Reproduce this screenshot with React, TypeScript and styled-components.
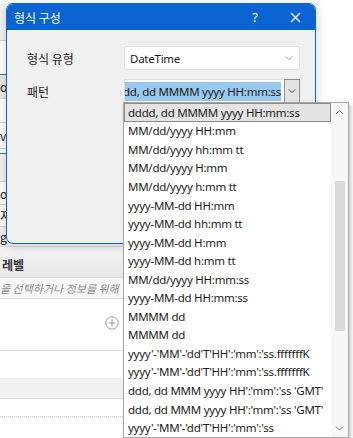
import React from 'react';
import styled, { createGlobalStyle } from 'styled-components';

const GlobalStyle = createGlobalStyle`
  html, body {
    margin: 0;
    padding: 0;
    background: #ffffff;
  }
  body {
    font-family: "Noto Sans", "Noto Sans CJK KR", sans-serif;
    font-size: 12px;
    color: #1b1b1b;
  }
`;

const FONT = `"Noto Sans", "Noto Sans CJK KR", sans-serif`;
const KFONT = `"Noto Sans CJK KR", "Noto Sans", sans-serif`;

const Screen = styled.div`
  position: relative;
  width: 353px;
  height: 438px;
  overflow: hidden;
  background: #ffffff;
  font-family: ${FONT};
`;

/* ---------- background window (mostly hidden behind the dialog) ---------- */

const Backdrop = styled.div`
  display: flex;
  flex-direction: column;
  width: 123px;
  overflow: hidden;
`;

const TopCaption = styled.div`
  height: 12px;
  margin-top: -9px;
  padding-left: 118px;
  width: 240px;
  white-space: nowrap;
  font-family: ${KFONT};
  font-size: 12px;
  line-height: 12px;
  color: #6d6d6d;
`;

const GridRow = styled.div<{ $h: number; $line: string; $bg: string }>`
  display: flex;
  align-items: center;
  height: ${({ $h }) => $h}px;
  box-sizing: border-box;
  border-bottom: 1px solid ${({ $line }) => $line};
  background: ${({ $bg }) => $bg};
  font-family: ${KFONT};
  font-size: 12px;
  color: #222;
`;

const LabelHeader = styled.div`
  display: flex;
  align-items: center;
  height: 31px;
  box-sizing: border-box;
  padding: 4px 0 0 2px;
  background: linear-gradient(#f4f4f4, #e8e8e8);
  border-bottom: 1px solid #d6d6d6;
  font-family: ${KFONT};
  font-weight: 700;
  font-size: 12px;
  color: #333;
`;

const HintRow = styled.div`
  height: 21px;
  box-sizing: border-box;
  display: flex;
  align-items: center;
  white-space: nowrap;
  overflow: hidden;
  background: #f8f8f8;
  border-bottom: 1px solid #d9d9d9;
  font-family: ${KFONT};
  font-style: italic;
  font-size: 11px;
  color: #8a8a8a;
`;

const AddArea = styled.div`
  height: 52px;
  box-sizing: border-box;
  display: flex;
  justify-content: flex-end;
  padding: 17px 4px 0 0;
  border-bottom: 1px solid #dcdcdc;
`;

const Band = styled.div<{ $h: number; $bg: string; $line: string; $dotted?: boolean }>`
  height: ${({ $h }) => $h}px;
  box-sizing: border-box;
  background: ${({ $bg }) => $bg};
  border-bottom: 1px ${({ $dotted }) => ($dotted ? 'dotted' : 'solid')} ${({ $line }) => $line};
`;

/* ---------- dialog ---------- */

const Dialog = styled.div`
  position: absolute;
  left: 6px;
  top: 3px;
  width: 310px;
  height: 241px;
  box-sizing: border-box;
  border: 1px solid #0a64d2;
  border-radius: 7px;
  background: #f0f0f0;
  overflow: hidden;
  box-shadow: 0 2px 12px rgba(0, 0, 0, 0.18);
  display: flex;
  flex-direction: column;
`;

const TitleBar = styled.div`
  height: 26px;
  flex: none;
  display: flex;
  align-items: center;
  background: #0a64d2;
  color: #ffffff;
  padding-left: 7px;
`;

const Title = styled.div`
  flex: 1;
  font-family: ${KFONT};
  font-size: 12px;
`;

const TitleButton = styled.div`
  width: 40px;
  height: 26px;
  display: flex;
  align-items: center;
  justify-content: center;
  font-size: 13px;
  color: #ffffff;
`;

const Body = styled.div`
  display: flex;
  flex-direction: column;
  gap: 9px;
  padding: 16px 15px 0 20px;
`;

const FieldRow = styled.div`
  display: flex;
  align-items: center;
`;

const FieldLabel = styled.div`
  width: 97px;
  font-family: ${KFONT};
  font-size: 12px;
  color: #1b1b1b;
`;

const Select = styled.div`
  width: 176px;
  height: 24px;
  box-sizing: border-box;
  display: flex;
  align-items: center;
  justify-content: space-between;
  padding: 0 6px 0 5px;
  background: #ffffff;
  border: 1px solid #e2e2e2;
  border-radius: 2px;
  font-size: 11.5px;
  letter-spacing: -0.25px;
`;

const Combo = styled.div`
  width: 176px;
  height: 24px;
  display: flex;
`;

const ComboText = styled.div`
  flex: 1;
  min-width: 0;
  box-sizing: border-box;
  display: flex;
  align-items: center;
  justify-content: flex-end;
  overflow: hidden;
  padding: 0 3px 0 1px;
  background: #ffffff;
  border: 1px solid #dcdcdc;
  border-right: none;
  white-space: nowrap;
`;

const Selection = styled.span`
  background: #99c9ef;
  line-height: 19px;
  font-size: 11.5px;
  letter-spacing: -0.25px;
`;

const ComboButton = styled.div`
  width: 16px;
  box-sizing: border-box;
  display: flex;
  align-items: center;
  justify-content: center;
  background: #e3e3e3;
  border: 1px solid #8c8c8c;
`;

/* ---------- dropdown list ---------- */

const DropList = styled.div`
  position: absolute;
  left: 123px;
  top: 102px;
  width: 226px;
  height: 336px;
  box-sizing: border-box;
  border: 1px solid #a9a9a9;
  background: #ffffff;
  box-shadow: 2px 2px 4px rgba(0, 0, 0, 0.22);
  display: flex;
`;

const Items = styled.div`
  flex: 1;
  min-width: 0;
  display: flex;
  flex-direction: column;
  overflow: hidden;
`;

const Item = styled.div<{ $selected?: boolean }>`
  height: 18.55px;
  flex: none;
  box-sizing: border-box;
  display: flex;
  align-items: center;
  padding-left: 3px;
  white-space: nowrap;
  font-size: 11.5px;
  letter-spacing: -0.25px;
  color: #1b1b1b;
  background: ${({ $selected }) => ($selected ? '#e3e3e3' : 'transparent')};
  border: 1px solid ${({ $selected }) => ($selected ? '#8a8a8a' : 'transparent')};
`;

const ScrollBar = styled.div`
  width: 17px;
  flex: none;
  display: flex;
  flex-direction: column;
  align-items: center;
  background: #f7f7f7;
`;

const ScrollArrow = styled.div`
  height: 18px;
  display: flex;
  align-items: center;
  justify-content: center;
`;

const Track = styled.div`
  flex: 1;
  display: flex;
  flex-direction: column;
  padding-top: 60px;
`;

const Thumb = styled.div`
  width: 10px;
  height: 150px;
  background: #dadada;
`;

const Chevron: React.FC<{ up?: boolean; color?: string; w?: number }> = ({ up, color = '#666', w = 9 }) => (
  <svg width={w} height={w / 2 + 2} viewBox="0 0 10 6">
    <polyline
      points={up ? '1,5 5,1 9,5' : '1,1 5,5 9,1'}
      fill="none"
      stroke={color}
      strokeWidth="1.1"
    />
  </svg>
);

const CloseIcon = () => (
  <svg width="11" height="11" viewBox="0 0 11 11">
    <path d="M1 1 L10 10 M10 1 L1 10" stroke="#ffffff" strokeWidth="1.2" />
  </svg>
);

const AddIcon = () => (
  <svg width="14" height="14" viewBox="0 0 14 14">
    <circle cx="7" cy="7" r="6.2" fill="none" stroke="#9a9a9a" strokeWidth="1" />
    <path d="M7 3.5 V10.5 M3.5 7 H10.5" stroke="#9a9a9a" strokeWidth="1" />
  </svg>
);

const backRows = [
  { h: 38, text: '', line: '#d8d8d8', bg: '#f3f3f3' },
  { h: 34, text: '', line: '#2b79d3', bg: '#ffffff' },
  { h: 24, text: 'o', line: '#d8d8d8', bg: '#e9e9e9' },
  { h: 24, text: '', line: '#d8d8d8', bg: '#ffffff' },
  { h: 26, text: 'v', line: '#d8d8d8', bg: '#ffffff' },
  { h: 5, text: '', line: '#2b79d3', bg: '#ffffff' },
  { h: 28, text: '', line: '#d8d8d8', bg: '#f3f3f3' },
  { h: 23, text: 'o', line: '#d8d8d8', bg: '#ffffff' },
  { h: 22, text: '지', line: '#d8d8d8', bg: '#ffffff' },
  { h: 20, text: 'g', line: '#d8d8d8', bg: '#f3f3f3' },
];

const patterns = [
  'dddd, dd MMMM yyyy HH:mm:ss',
  'MM/dd/yyyy HH:mm',
  'MM/dd/yyyy hh:mm tt',
  'MM/dd/yyyy H:mm',
  'MM/dd/yyyy h:mm tt',
  'yyyy-MM-dd HH:mm',
  'yyyy-MM-dd hh:mm tt',
  'yyyy-MM-dd H:mm',
  'yyyy-MM-dd h:mm tt',
  'MM/dd/yyyy HH:mm:ss',
  'yyyy-MM-dd HH:mm:ss',
  'MMMM dd',
  'MMMM dd',
  "yyyy'-'MM'-'dd'T'HH':'mm':'ss.fffffffK",
  "yyyy'-'MM'-'dd'T'HH':'mm':'ss.fffffffK",
  "ddd, dd MMM yyyy HH':'mm':'ss 'GMT'",
  "ddd, dd MMM yyyy HH':'mm':'ss 'GMT'",
  "yyyy'-'MM'-'dd'T'HH':'mm':'ss",
];

const App: React.FC = () => {
  return (
    <Screen>
      <GlobalStyle />
      <Backdrop>
        <TopCaption>아래로 보기</TopCaption>
        {backRows.map((r, i) => (
          <GridRow key={i} $h={r.h} $line={r.line} $bg={r.bg}>
            {r.text}
          </GridRow>
        ))}
        <LabelHeader>레벨</LabelHeader>
        <HintRow>을 선택하거나 정보를 위해</HintRow>
        <AddArea>
          <AddIcon />
        </AddArea>
        <Band $h={27} $bg="#ffffff" $line="#ffffff" />
        <Band $h={21} $bg="#f1f1f1" $line="#dcdcdc" />
        <Band $h={18} $bg="#ffffff" $line="#c4c4c4" $dotted />
      </Backdrop>

      <Dialog>
        <TitleBar>
          <Title>형식 구성</Title>
          <TitleButton>?</TitleButton>
          <TitleButton>
            <CloseIcon />
          </TitleButton>
        </TitleBar>
        <Body>
          <FieldRow>
            <FieldLabel>형식 유형</FieldLabel>
            <Select>
              <span>DateTime</span>
              <Chevron color="#8a8a8a" w={8} />
            </Select>
          </FieldRow>
          <FieldRow>
            <FieldLabel>패턴</FieldLabel>
            <Combo>
              <ComboText>
                <Selection>dddd, dd MMMM yyyy HH:mm:ss</Selection>
              </ComboText>
              <ComboButton>
                <Chevron color="#333" w={8} />
              </ComboButton>
            </Combo>
          </FieldRow>
        </Body>
      </Dialog>

      <DropList>
        <Items>
          {patterns.map((p, i) => (
            <Item key={i} $selected={i === 0}>
              {p}
            </Item>
          ))}
        </Items>
        <ScrollBar>
          <ScrollArrow>
            <Chevron up color="#7a7a7a" />
          </ScrollArrow>
          <Track>
            <Thumb />
          </Track>
          <ScrollArrow>
            <Chevron color="#7a7a7a" />
          </ScrollArrow>
        </ScrollBar>
      </DropList>
    </Screen>
  );
};

export default App;
